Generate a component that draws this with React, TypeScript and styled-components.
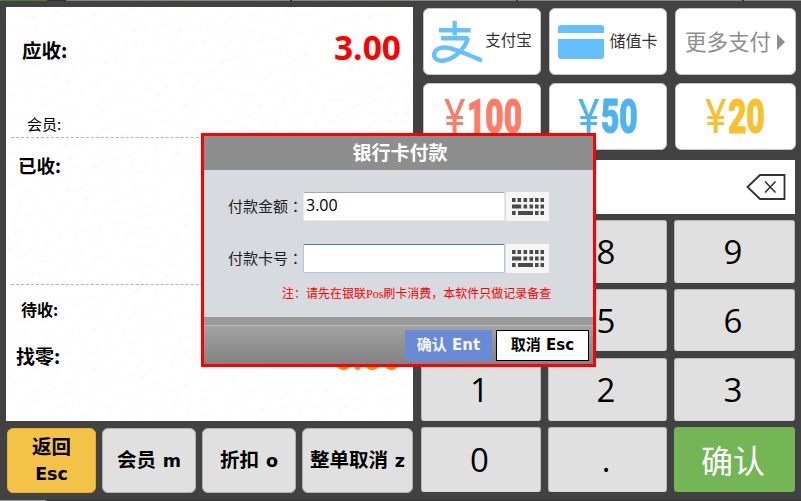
import React from "react";
import styled, { createGlobalStyle } from "styled-components";

const CJK = '"Noto Sans CJK SC", sans-serif';
const LATIN_BOLD = `"DejaVu Sans", ${CJK}`;
const DIGITS = `"Open Sans", ${CJK}`;

const Global = createGlobalStyle`
  html, body { margin: 0; padding: 0; background: #424242; }
  * { box-sizing: border-box; }
`;

const Page = styled.div`
  position: relative;
  width: 801px;
  height: 501px;
  overflow: hidden;
  background: #424242;
  display: flex;
  flex-direction: column;
  font-family: ${CJK};
  color: #000;
`;

const Strip = styled.div`
  display: flex;
  height: 1px;
  flex: none;
`;

const StripPiece = styled.div<{ $w?: number; $c: string }>`
  flex: ${(p) => (p.$w ? `0 0 ${p.$w}px` : "1")};
  background: ${(p) => p.$c};
`;

const Main = styled.div`
  flex: 1;
  display: grid;
  grid-template-columns: 407px 374px;
  column-gap: 8px;
  padding: 6px 6px 6px 6px;
`;

const LeftColumn = styled.div`
  display: flex;
  flex-direction: column;
  gap: 7px;
`;

const Panel = styled.div`
  position: relative;
  height: 414px;
  background: #fbfbfb;
  overflow: hidden;
  display: flex;
  flex-direction: column;
`;

const Texture = styled.svg`
  position: absolute;
  inset: 0;
  width: 100%;
  height: 100%;
`;

const Section = styled.div<{ $h?: number; $dashed?: boolean; $top: number }>`
  position: relative;
  height: ${(p) => (p.$h ? `${p.$h}px` : "auto")};
  flex: ${(p) => (p.$h ? "none" : "1")};
  margin-left: 5px;
  padding-top: ${(p) => p.$top}px;
  border-bottom: ${(p) => (p.$dashed ? "1px dashed #b4b4b4" : "none")};
`;

const SummaryRow = styled.div<{ $h: number; $indent: number; $gap?: number }>`
  display: flex;
  align-items: center;
  justify-content: space-between;
  height: ${(p) => p.$h}px;
  padding: 0 12px 0 ${(p) => p.$indent}px;
  margin-top: ${(p) => p.$gap ?? 0}px;
`;

const SummaryLabel = styled.span<{ $size: number; $weight?: number }>`
  font-size: ${(p) => p.$size}px;
  font-weight: ${(p) => p.$weight ?? 700};
  line-height: 1;
`;

const Amount = styled.span<{ $color: string; $shift: number }>`
  font-family: ${DIGITS};
  font-size: 33.5px;
  font-weight: 700;
  line-height: 1;
  margin-top: ${(p) => p.$shift * 2}px;
  color: ${(p) => p.$color};
`;

const ActionRow = styled.div`
  height: 65px;
  display: grid;
  grid-template-columns: 89px 94px 94px 111px;
  column-gap: 6px;
  padding-left: 1px;
`;

const ActionButton = styled.button<{ $primary?: boolean }>`
  margin: 0;
  padding: 0;
  border: 1px solid ${(p) => (p.$primary ? "#e0b135" : "#b2b2b2")};
  border-radius: 6px;
  background: ${(p) => (p.$primary ? "#f4c247" : "#e0e0e0")};
  color: #000;
  font-family: ${LATIN_BOLD};
  font-size: 19.5px;
  font-weight: 700;
  line-height: 26px;
  white-space: nowrap;
`;

const HotKey = styled.span`
  font-size: 17.5px;
`;

const RightColumn = styled.div`
  display: flex;
  flex-direction: column;
`;

const PayGrid = styled.div`
  display: grid;
  grid-template-columns: 118px 118px 121px;
  grid-template-rows: 67px 67px;
  column-gap: 8px;
  row-gap: 8px;
  margin: 1px 0 0 2px;
`;

const PayButton = styled.button`
  margin: 0;
  padding: 0;
  border: 1px solid #c4c4c4;
  border-radius: 6px;
  background: #fff;
  display: flex;
  align-items: center;
  justify-content: center;
  font-family: ${CJK};
`;

const PayLabel = styled.span<{ $size: number; $color: string; $lead: number; $lift: number }>`
  margin-left: ${(p) => p.$lead}px;
  margin-bottom: ${(p) => p.$lift * 2}px;
  font-size: ${(p) => p.$size}px;
  color: ${(p) => p.$color};
  line-height: 1;
  white-space: nowrap;
`;

const Yen = styled.span<{ $color: string }>`
  display: inline-block;
  width: 23px;
  font-family: Roboto, sans-serif;
  font-size: 48px;
  font-weight: 400;
  line-height: 1;
  color: ${(p) => p.$color};
  transform: scaleX(0.85);
  transform-origin: left center;
`;

const Cash = styled.span<{ $color: string; $w: number }>`
  display: inline-block;
  width: ${(p) => p.$w}px;
  text-align: left;
  font-family: Roboto, sans-serif;
  font-size: 48px;
  font-weight: 900;
  line-height: 1;
  color: ${(p) => p.$color};
  -webkit-text-stroke: 1px ${(p) => p.$color};
  transform: scaleX(0.66);
  transform-origin: left center;
`;

const Display = styled.div`
  height: 54px;
  margin-top: 10px;
  padding-right: 9px;
  background: #fff;
  display: flex;
  align-items: center;
  justify-content: flex-end;
`;

const Keypad = styled.div`
  display: grid;
  grid-template-columns: 120px 119px 121px;
  grid-template-rows: 63px 62px 63px 65px;
  column-gap: 7px;
  margin-top: 6px;
  row-gap: 6.34px;
`;

const Key = styled.button<{ $confirm?: boolean }>`
  margin: 0;
  padding: ${(p) => (p.$confirm ? "3px 3px 0 0" : "0 3px 0 0")};
  border: 1px solid ${(p) => (p.$confirm ? "#74b556" : "#b8b8b8")};
  border-bottom-color: ${(p) => (p.$confirm ? "#74b556" : "#d8d8d8")};
  border-radius: 3px;
  background: ${(p) => (p.$confirm ? "#74b556" : "#e0e0e0")};
  color: ${(p) => (p.$confirm ? "#fff" : "#000")};
  font-family: ${DIGITS};
  font-size: ${(p) => (p.$confirm ? 32 : 33)}px;
  line-height: 1;
`;

const Dialog = styled.div`
  position: absolute;
  left: 201px;
  top: 133px;
  width: 395px;
  height: 234px;
  border: 3px solid #ff0000;
  display: flex;
  flex-direction: column;
  background: #d7dade;
`;

const DialogTitle = styled.div`
  height: 34px;
  flex: none;
  padding-left: 3px;
  background: #8e8e8e;
  color: #fff;
  font-size: 19px;
  font-weight: 700;
  line-height: 31px;
  text-align: center;
`;

const DialogBody = styled.div`
  height: 147px;
  flex: none;
  padding-top: 22px;
  background: #d7dade;
`;

const FieldRow = styled.div<{ $gap?: number }>`
  display: flex;
  align-items: stretch;
  height: 29px;
  margin-top: ${(p) => p.$gap ?? 0}px;
  padding-left: 24px;
`;

const FieldLabel = styled.label`
  width: 75px;
  flex: none;
  font-family: "Noto Sans CJK TC", sans-serif;
  font-size: 15px;
  line-height: 27px;
  color: #222;
  white-space: nowrap;
`;

const FieldInput = styled.input<{ $focus?: boolean }>`
  width: 202px;
  margin: 0;
  padding: 0 0 3px 2px;
  border: 1px solid ${(p) => (p.$focus ? "#a9cbe2" : "#e8e8e8")};
  border-top-color: ${(p) => (p.$focus ? "#3f7fae" : "#a8a8a8")};
  border-radius: 2px;
  outline: none;
  background: #fff;
  font-family: ${DIGITS};
  font-size: 16px;
  color: #000;
`;

const KeyboardButton = styled.div`
  width: 43px;
  margin-left: 1px;
  background: #f6f6f6;
  display: flex;
  align-items: center;
  justify-content: center;
`;

const Note = styled.div`
  margin-top: 13px;
  padding-left: 78px;
  height: 16px;
  font-family: "Liberation Serif", ${CJK};
  font-size: 12px;
  line-height: 16px;
  color: #ff0000;
  white-space: nowrap;
`;

const DialogFooter = styled.div`
  flex: 1;
  display: flex;
  flex-direction: column;
`;

const FooterBand = styled.div`
  height: 8px;
  background: #9a9a9a;
`;

const FooterBar = styled.div`
  flex: 1;
  border-top: 1px solid #b6b6b6;
  background: linear-gradient(#a2a2a2, #838383);
  padding: 4px 4px 3px 0;
  display: flex;
  justify-content: flex-end;
  gap: 4px;
`;

const DialogButton = styled.button<{ $primary?: boolean; $w: number }>`
  width: ${(p) => p.$w}px;
  height: 31px;
  margin: 0;
  padding: 0;
  border: ${(p) => (p.$primary ? "none" : "1px solid #000")};
  background: ${(p) => (p.$primary ? "#6b8ad6" : "#fff")};
  color: ${(p) => (p.$primary ? "#f4f4f4" : "#000")};
  font-family: ${LATIN_BOLD};
  font-size: 15px;
  font-weight: 700;
  line-height: 1;
  white-space: nowrap;
`;

const KeyboardIcon = () => (
  <svg width="32" height="17" viewBox="0 0 32 17" fill="#4a4a4a">
    {[0, 5.5, 11.5, 17.5, 23, 28.5].map((x) => (
      <rect key={x} x={x} y="0" width="3.6" height="4" />
    ))}
    <rect x="0" y="6.5" width="9.2" height="4" />
    {[11.5, 17.5, 23, 28.5].map((x) => (
      <rect key={x} x={x} y="6.5" width="3.6" height="4" />
    ))}
    <rect x="0" y="13" width="3.6" height="4" />
    <rect x="6" y="13" width="15" height="4" />
    {[23, 28.5].map((x) => (
      <rect key={x} x={x} y="13" width="3.6" height="4" />
    ))}
  </svg>
);

const AlipayIcon = () => (
  <svg width="50" height="43" viewBox="0 0 50 43" fill="none" stroke="#64c0ff" strokeWidth="4.4">
    <path d="M7 10.3H38.5M22.7 1V15.5M9 18.3H36.5" />
    <path d="M36 18C33 29 22 39 12 40.5C5 41.5 1.5 38.5 2.2 34C3 29.5 8 27 14 27.5C24 28.5 38 36 50 40.5" />
  </svg>
);

const CardIcon = () => (
  <svg width="46" height="34" viewBox="0 0 46 34">
    <path
      d="M3 0H43a3 3 0 0 1 3 3V8H0V3a3 3 0 0 1 3-3ZM0 14H46V31a3 3 0 0 1-3 3H3a3 3 0 0 1-3-3Z"
      fill="#64c0ff"
    />
  </svg>
);

const ArrowIcon = () => (
  <svg width="9" height="16" viewBox="0 0 9 16" style={{ marginLeft: 6 }}>
    <path d="M0 0L8 8L0 16Z" fill="#8e8e8e" />
  </svg>
);

const BackspaceIcon = () => (
  <svg width="40" height="26" viewBox="0 0 40 26" fill="none" stroke="#333" strokeWidth="1.8">
    <path d="M1.5 13L14 1H38.5V25H14Z" />
    <path d="M19 7.5L29.5 18.5M29.5 7.5L19 18.5" strokeWidth="1.6" />
  </svg>
);

export default function App() {
  return (
    <Page>
      <Global />
      <Strip>
        <StripPiece $w={47} $c="#4f7a31" />
        <StripPiece $w={19} $c="#2f2f2f" />
        <StripPiece $w={224} $c="#8a8678" />
        <StripPiece $w={2} $c="#2f2f2f" />
        <StripPiece $w={224} $c="#8a8678" />
        <StripPiece $w={2} $c="#2f2f2f" />
        <StripPiece $w={224} $c="#8a8678" />
        <StripPiece $w={2} $c="#2f2f2f" />
        <StripPiece $c="#8a8678" />
      </Strip>
      <Main>
        <LeftColumn>
          <Panel>
            <Texture aria-hidden="true">
              <filter id="paper" x="0" y="0" width="100%" height="100%">
                <feTurbulence type="fractalNoise" baseFrequency="0.1 0.13" numOctaves="4" seed="11" />
                <feDiffuseLighting lightingColor="#ffffff" surfaceScale="0.55" diffuseConstant="1.02">
                  <feDistantLight azimuth="225" elevation="78" />
                </feDiffuseLighting>
              </filter>
              <rect width="100%" height="100%" filter="url(#paper)" />
            </Texture>
            <Section $h={131} $dashed $top={28}>
              <SummaryRow $h={30} $indent={11}>
                <SummaryLabel $size={19.5}>应收:</SummaryLabel>
                <Amount $color="#ff0000" $shift={-2}>3.00</Amount>
              </SummaryRow>
              <SummaryRow $h={20} $indent={16} $gap={48}>
                <SummaryLabel $size={15} $weight={400}>会员:</SummaryLabel>
              </SummaryRow>
            </Section>
            <Section $h={147} $dashed $top={15}>
              <SummaryRow $h={24} $indent={7}>
                <SummaryLabel $size={18.5}>已收:</SummaryLabel>
              </SummaryRow>
            </Section>
            <Section $top={13}>
              <SummaryRow $h={22} $indent={10}>
                <SummaryLabel $size={16}>待收:</SummaryLabel>
              </SummaryRow>
              <SummaryRow $h={28} $indent={5} $gap={21}>
                <SummaryLabel $size={19}>找零:</SummaryLabel>
                <Amount $color="#ff8c00" $shift={3}>0.00</Amount>
              </SummaryRow>
            </Section>
          </Panel>
          <ActionRow>
            <ActionButton $primary>返回<br /><HotKey>Esc</HotKey></ActionButton>
            <ActionButton>会员 <HotKey>m</HotKey></ActionButton>
            <ActionButton>折扣 <HotKey>o</HotKey></ActionButton>
            <ActionButton>整单取消 <HotKey>z</HotKey></ActionButton>
          </ActionRow>
        </LeftColumn>
        <RightColumn>
          <PayGrid>
            <PayButton>
              <AlipayIcon />
              <PayLabel $size={15.5} $color="#333" $lead={3} $lift={2}>支付宝</PayLabel>
            </PayButton>
            <PayButton>
              <CardIcon />
              <PayLabel $size={16} $color="#333" $lead={5} $lift={2}>储值卡</PayLabel>
            </PayButton>
            <PayButton>
              <PayLabel $size={21.5} $color="#8e8e8e" $lead={0} $lift={1}>更多支付</PayLabel>
              <ArrowIcon />
            </PayButton>
            <PayButton>
              <Yen $color="#fd7c68">¥</Yen>
              <Cash $color="#fd7c68" $w={54}>100</Cash>
            </PayButton>
            <PayButton>
              <Yen $color="#4fb3f0">¥</Yen>
              <Cash $color="#4fb3f0" $w={38}>50</Cash>
            </PayButton>
            <PayButton>
              <Yen $color="#f8c02d">¥</Yen>
              <Cash $color="#f8c02d" $w={38}>20</Cash>
            </PayButton>
          </PayGrid>
          <Display>
            <BackspaceIcon />
          </Display>
          <Keypad>
            {["7", "8", "9", "4", "5", "6", "1", "2", "3", "0", "."].map((k) => (
              <Key key={k}>{k}</Key>
            ))}
            <Key $confirm>确认</Key>
          </Keypad>
        </RightColumn>
      </Main>
      <Strip>
        <StripPiece $w={46} $c="#9a9a9a" />
        <StripPiece $c="#333333" />
      </Strip>
      <Dialog>
        <DialogTitle>银行卡付款</DialogTitle>
        <DialogBody>
          <FieldRow>
            <FieldLabel>付款金额：</FieldLabel>
            <FieldInput readOnly value="3.00" />
            <KeyboardButton><KeyboardIcon /></KeyboardButton>
          </FieldRow>
          <FieldRow $gap={23}>
            <FieldLabel>付款卡号：</FieldLabel>
            <FieldInput readOnly $focus value="" />
            <KeyboardButton><KeyboardIcon /></KeyboardButton>
          </FieldRow>
          <Note>注：请先在银联Pos刷卡消费，本软件只做记录备查</Note>
        </DialogBody>
        <DialogFooter>
          <FooterBand />
          <FooterBar>
            <DialogButton $primary $w={87}>确认 Ent</DialogButton>
            <DialogButton $w={93}>取消 Esc</DialogButton>
          </FooterBar>
        </DialogFooter>
      </Dialog>
    </Page>
  );
}
